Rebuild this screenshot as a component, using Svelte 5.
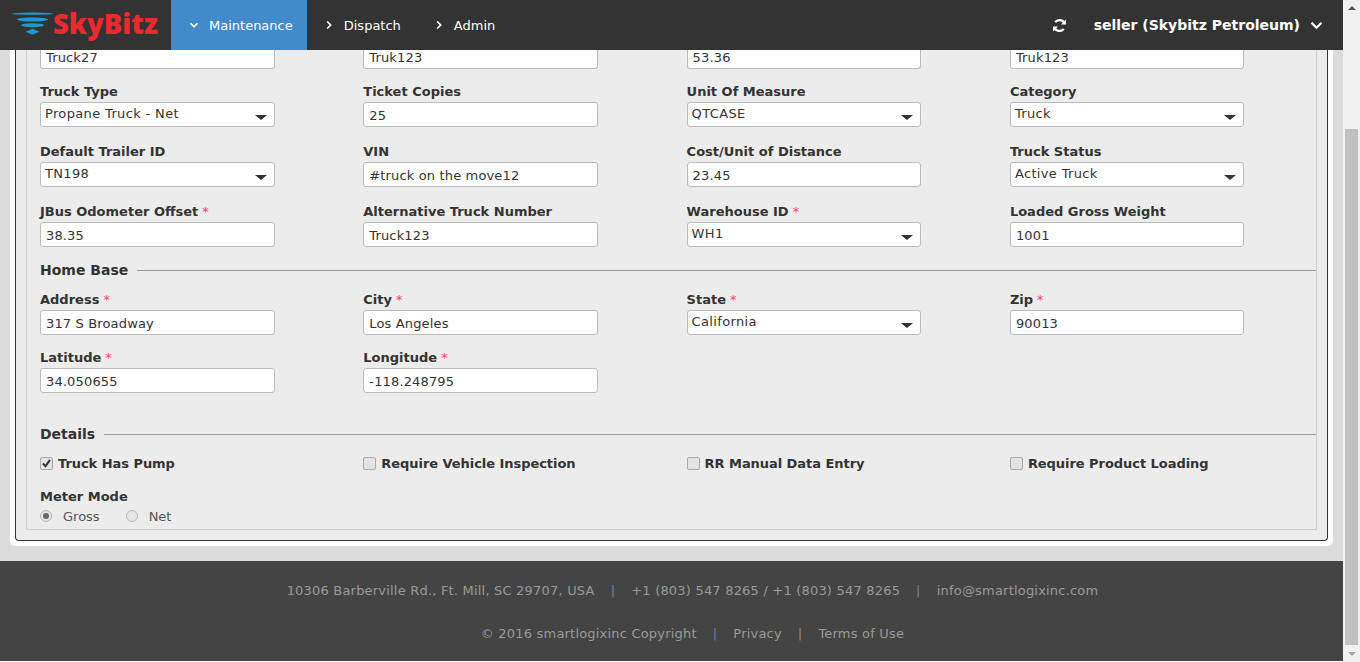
<script>
	const topRow = ['Truck27', 'Truk123', '53.36', 'Truk123'];

	const rows = [
		[
			{ label: 'Truck Type', value: 'Propane Truck - Net', select: true },
			{ label: 'Ticket Copies', value: '25' },
			{ label: 'Unit Of Measure', value: 'QTCASE', select: true },
			{ label: 'Category', value: 'Truck', select: true }
		],
		[
			{ label: 'Default Trailer ID', value: 'TN198', select: true },
			{ label: 'VIN', value: '#truck on the move12' },
			{ label: 'Cost/Unit of Distance', value: '23.45' },
			{ label: 'Truck Status', value: 'Active Truck', select: true }
		],
		[
			{ label: 'JBus Odometer Offset', value: '38.35', req: true },
			{ label: 'Alternative Truck Number', value: 'Truck123' },
			{ label: 'Warehouse ID', value: 'WH1', req: true, select: true },
			{ label: 'Loaded Gross Weight', value: '1001' }
		]
	];

	const baseRows = [
		[
			{ label: 'Address', value: '317 S Broadway', req: true },
			{ label: 'City', value: 'Los Angeles', req: true },
			{ label: 'State', value: 'California', req: true, select: true },
			{ label: 'Zip', value: '90013', req: true }
		],
		[
			{ label: 'Latitude', value: '34.050655', req: true },
			{ label: 'Longitude', value: '-118.248795', req: true }
		]
	];

	const checks = [
		{ label: 'Truck Has Pump', on: true },
		{ label: 'Require Vehicle Inspection' },
		{ label: 'RR Manual Data Entry' },
		{ label: 'Require Product Loading' }
	];
</script>

{#snippet field(f)}
	<div class="field">
		<div class="label">{f.label}{#if f.req}<span class="req">*</span>{/if}</div>
		{#if f.select}
			<div class="input select">{f.value}<span class="caret"></span></div>
		{:else}
			<div class="input">{f.value}</div>
		{/if}
	</div>
{/snippet}

<div class="window">
	<div class="page">
		<header>
			<div class="logo">
				<svg width="41" height="23" viewBox="0 0 41 23">
					<ellipse cx="20.5" cy="1.7" rx="20.5" ry="1.1" fill="#1c9ad6" />
					<ellipse cx="20.5" cy="7.5" rx="15.5" ry="2" fill="#1c9ad6" />
					<ellipse cx="20.5" cy="13.2" rx="11.5" ry="2" fill="#1c9ad6" />
					<polygon points="13.5,19.7 20.5,16.7 27.5,19.7 20.5,22.7" fill="#1c9ad6" />
				</svg>
				<span>SkyBitz</span>
			</div>
			<nav>
				<div class="item active">
					<svg class="chev" width="10" height="10" viewBox="0 0 10 10"><path d="M1.5 3.2 5 6.7 8.5 3.2" /></svg>
					Maintenance
				</div>
				<div class="item">
					<svg class="chev" width="10" height="10" viewBox="0 0 10 10"><path d="M3.2 1.5 6.7 5 3.2 8.5" /></svg>
					Dispatch
				</div>
				<div class="item">
					<svg class="chev" width="10" height="10" viewBox="0 0 10 10"><path d="M3.2 1.5 6.7 5 3.2 8.5" /></svg>
					Admin
				</div>
			</nav>
			<div class="right">
				<svg class="sync" width="15" height="15" viewBox="0 0 15 15">
					<path d="M12.6 5.6A5.4 5.4 0 0 0 3.2 4.2" />
					<path d="M2.4 9.4a5.4 5.4 0 0 0 9.4 1.4" />
					<polygon class="tip" points="14,1.4 14,6.6 9,6.6" />
					<polygon class="tip" points="1,13.6 1,8.4 6,8.4" />
				</svg>
				<span class="user">seller (Skybitz Petroleum)</span>
				<svg class="user-chev" width="13" height="13" viewBox="0 0 13 13"><path d="M1.5 3.8 6.5 8.8 11.5 3.8" /></svg>
			</div>
		</header>

		<main>
			<div class="card">
				<div class="panel">
					<div class="fieldset">
						<div class="grid top">
							{#each topRow as v}
								<div class="input">{v}</div>
							{/each}
						</div>

						{#each rows as row}
							<div class="grid row">
								{#each row as f}
									{@render field(f)}
								{/each}
							</div>
						{/each}

						<div class="legend home">Home Base</div>
						{#each baseRows as row}
							<div class="grid base">
								{#each row as f}
									{@render field(f)}
								{/each}
							</div>
						{/each}

						<div class="legend details">Details</div>
						<div class="grid checks">
							{#each checks as c}
								<div class="check">
									<span class="box">
										{#if c.on}
											<svg width="11" height="11" viewBox="0 0 11 11"><path d="M2 5.5 4.5 8.2 9 1.8" /></svg>
										{/if}
									</span>
									{c.label}
								</div>
							{/each}
						</div>

						<div class="label meter">Meter Mode</div>
						<div class="radios">
							<span class="radio on"></span><span class="radio-label">Gross</span>
							<span class="radio"></span><span class="radio-label">Net</span>
						</div>
					</div>
				</div>
			</div>
		</main>

		<footer>
			<div class="foot-line">
				<span>10306 Barberville Rd., Ft. Mill, SC 29707, USA</span>
				<span class="sep blue">|</span>
				<span>+1 (803) 547 8265 / +1 (803) 547 8265</span>
				<span class="sep blue">|</span>
				<span>info@smartlogixinc.com</span>
			</div>
			<div class="foot-line second">
				<span>© 2016 smartlogixinc Copyright</span>
				<span class="sep blue">|</span>
				<span>Privacy</span>
				<span class="sep amber">|</span>
				<span>Terms of Use</span>
			</div>
		</footer>
	</div>

	<div class="scrollbar">
		<span class="arrow up"></span>
		<div class="track"><div class="thumb"></div></div>
		<span class="arrow down"></span>
	</div>
</div>

<style>
	:global(body) {
		margin: 0;
		background: #f1f1f1;
	}

	.window {
		display: flex;
		width: 1360px;
		height: 662px;
		overflow: hidden;
		font-family: "DejaVu Sans", Verdana, sans-serif;
		font-size: 13px;
		color: #333;
	}

	.page {
		width: 1343px;
		display: flex;
		flex-direction: column;
		background: #fff;
	}

	header {
		height: 50px;
		flex: none;
		background: #333;
		color: #fff;
		display: flex;
		align-items: stretch;
		position: relative;
		z-index: 2;
	}

	.logo {
		width: 171px;
		display: flex;
		align-items: center;
		padding-left: 12px;
		box-sizing: border-box;
	}

	.logo svg {
		flex: none;
		margin-top: -4px;
	}

	.logo span {
		font-family: "Open Sans", sans-serif;
		font-weight: 800;
		font-size: 27.5px;
		color: #ea2a2f;
		margin-top: -3px;
	}

	nav {
		display: flex;
	}

	.item {
		display: flex;
		align-items: center;
		gap: 10px;
		padding: 0 16px 0 17px;
	}

	.item.active {
		background: #428bca;
		padding: 0 14px 0 18px;
	}

	.chev path,
	.user-chev path {
		fill: none;
		stroke: #fff;
		stroke-width: 1.6;
	}

	.right {
		margin-left: auto;
		display: flex;
		align-items: center;
		padding-right: 20px;
	}

	.sync path {
		fill: none;
		stroke: #fff;
		stroke-width: 2.2;
	}

	.sync .tip {
		fill: #fff;
	}

	.user {
		font-size: 14px;
		font-weight: 700;
		margin-left: 27px;
		margin-right: 10px;
	}

	.user-chev path {
		stroke-width: 2.2;
	}

	main {
		flex: none;
		height: 511px;
		background: #dcdcdc;
		overflow: hidden;
		padding: 0 10px;
	}

	.card {
		height: 496px;
		box-sizing: border-box;
		background: #fff;
		border-radius: 0 0 5px 5px;
		padding: 0 5px 5px;
	}

	.panel {
		height: 100%;
		box-sizing: border-box;
		background: #ececec;
		border: 1px solid #333;
		border-top: 0;
		border-radius: 0 0 4px 4px;
		padding: 0 10px 10px;
	}

	.fieldset {
		height: 100%;
		box-sizing: border-box;
		border: 1px solid #ccc;
		border-top: 0;
		padding: 0 0 0 13px;
		overflow: hidden;
	}

	.grid {
		display: grid;
		grid-template-columns: repeat(4, 323.3px);
	}

	.grid.top {
		height: 19px;
		align-items: end;
		margin-bottom: 15px;
	}

	.grid.top .input {
		height: 19px;
		border-top: 0;
		border-radius: 0 0 3px 3px;
		line-height: 16px;
	}

	.grid.row {
		height: 60px;
	}

	.grid.base {
		height: 58px;
	}

	.field {
		display: flex;
		flex-direction: column;
	}

	.label {
		font-weight: 700;
		line-height: 16px;
		height: 16px;
		margin-bottom: 2px;
	}

	.req {
		color: #ff4466;
		font-weight: 400;
		margin-left: 4px;
	}

	.input {
		width: 234.55px;
		height: 25px;
		box-sizing: border-box;
		background: #fff;
		border: 1px solid #bbb;
		border-radius: 3px;
		padding: 0 5px;
		line-height: 25px;
		position: relative;
		color: #333;
		letter-spacing: 0.15px;
	}

	.input.select {
		padding: 0 4px;
		line-height: 22px;
		letter-spacing: 0.35px;
	}

	.caret {
		position: absolute;
		right: 7px;
		top: 12px;
		border: 6px solid transparent;
		border-top: 5px solid #333;
		border-bottom: 0;
	}

	.legend {
		font-weight: 700;
		font-size: 14px;
		line-height: 18px;
		display: flex;
		align-items: center;
		gap: 9px;
		color: #333;
	}

	.legend::after {
		content: '';
		flex: 1;
		border-top: 1px solid #999;
	}

	.legend.home {
		margin-top: -3px;
		margin-bottom: 13px;
	}

	.legend.details {
		margin-top: 17px;
		margin-bottom: 10px;
	}

	.grid.checks {
		height: 20px;
	}

	.check {
		display: flex;
		align-items: center;
		font-weight: 700;
		gap: 5px;
		letter-spacing: -0.05px;
	}

	.box {
		width: 11px;
		height: 11px;
		border: 1px solid #aaa;
		border-radius: 2px;
		background: #e4e4e4;
		flex: none;
		display: flex;
	}

	.box path {
		fill: none;
		stroke: #333;
		stroke-width: 2;
	}

	.meter {
		margin-top: 16px;
		margin-bottom: 2px;
	}

	.radios {
		display: flex;
		align-items: center;
		height: 18px;
	}

	.radio {
		width: 10px;
		height: 10px;
		border: 1px solid #b5b5b5;
		border-radius: 50%;
		background: #e6e6e6;
		position: relative;
		margin-right: 11px;
	}

	.radio.on::after {
		content: '';
		position: absolute;
		left: 2px;
		top: 2px;
		width: 6px;
		height: 6px;
		border-radius: 50%;
		background: #666;
	}

	.radio-label {
		margin-right: 26px;
		color: #555;
	}

	footer {
		flex: 1;
		background: #444;
		color: #999;
		margin-bottom: 1px;
		padding: 21px 0 0 42px;
		box-sizing: border-box;
		letter-spacing: 0.2px;
	}

	.foot-line {
		display: flex;
		justify-content: center;
		gap: 16px;
		line-height: 18px;
	}

	.foot-line.second {
		margin-top: 25px;
	}

	.sep.blue {
		color: #5f87a3;
	}

	.sep.amber {
		color: #a08a6a;
	}

	.scrollbar {
		width: 17px;
		background: #f1f1f1;
		display: flex;
		flex-direction: column;
		align-items: center;
	}

	.arrow {
		flex: none;
		width: 0;
		box-sizing: border-box;
		border: 4px solid transparent;
	}

	.arrow.up {
		border-bottom: 4px solid #555;
		border-top: 0;
		height: 4px;
		margin: 6px 0 7px;
	}

	.arrow.down {
		border-top: 4px solid #a3a3a3;
		border-bottom: 0;
		height: 4px;
		margin: 7px 0 6px;
	}

	.track {
		flex: 1;
		width: 100%;
		padding: 112px 2px 0;
		box-sizing: border-box;
	}

	.thumb {
		height: 516px;
		background: #c1c1c1;
	}
</style>
